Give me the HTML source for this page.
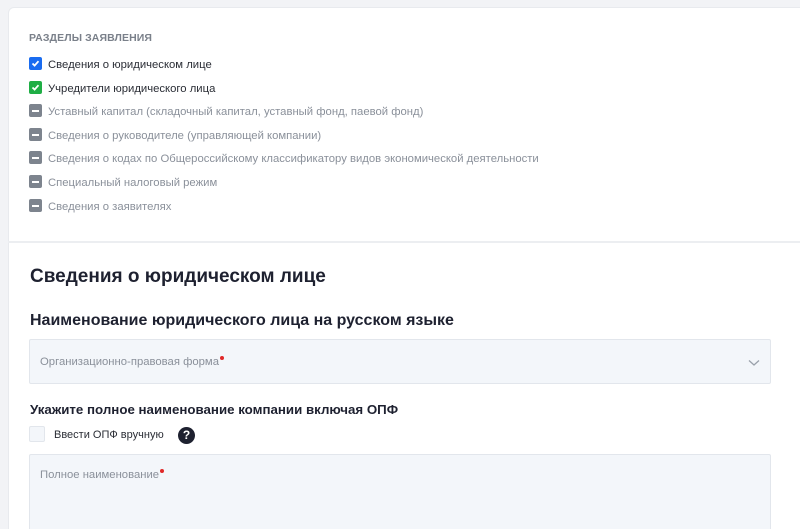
<!DOCTYPE html>
<html><head><meta charset="utf-8"><style>
*{margin:0;padding:0;box-sizing:border-box}
html,body{width:800px;height:529px;overflow:hidden}
body{background:#f2f3f6;font-family:"Liberation Sans",sans-serif;position:relative}
.card{position:absolute;left:8px;top:7px;width:810px;height:540px;background:#fff;border-radius:6px;border:1px solid #e8eaee}
.abs{position:absolute;white-space:nowrap}
.hdr{left:29px;top:32px;font-size:10.5px;font-weight:bold;color:#7a808a;letter-spacing:0.1px}
.item{left:29px;font-size:11.3px;color:#8a909a;line-height:14px}
.item i{position:absolute;left:0;top:0;width:13px;height:13px;border-radius:2px;background:#7d848e}
.item i:after{content:"";position:absolute;left:3px;top:5.5px;width:7px;height:2px;background:#fff}
.item span{margin-left:19px;position:relative;top:1px}
.item.dark{color:#2a2d35}
.item.b i{background:#1a6cf0}.item.g i{background:#1fae45}
.item.b i:after,.item.g i:after{display:none}
.item svg{position:absolute;left:2px;top:2px}
.div{left:8px;top:241px;width:800px;height:2px;background:#eceef1}
h2{position:absolute;left:30px;top:266px;font-size:19px;color:#1e2130;white-space:nowrap}
h3{position:absolute;left:30px;top:312px;font-size:16px;color:#1e2130;white-space:nowrap}
.field{position:absolute;left:29px;width:742px;background:#f3f6fa;border:1px solid #e2e6ec;border-radius:2px}
.ph{position:absolute;font-size:11.3px;color:#8a909a;white-space:nowrap}
.ph:after{content:"";position:absolute;right:-5px;top:0;width:4px;height:4px;border-radius:50%;background:#e02828}
h4{position:absolute;left:30px;top:402px;font-size:13.3px;color:#1e2130;white-space:nowrap}
</style></head><body>
<div class="card"></div>
<div class="abs hdr">РАЗДЕЛЫ ЗАЯВЛЕНИЯ</div>
<div class="abs item dark b" style="top:57px"><i><svg width="9" height="9" viewBox="0 0 9 9"><path d="M1.5 4.5L3.6 6.6L7.5 2.2" stroke="#fff" stroke-width="1.8" fill="none"/></svg></i><span>Сведения о юридическом лице</span></div>
<div class="abs item dark g" style="top:81px"><i><svg width="9" height="9" viewBox="0 0 9 9"><path d="M1.5 4.5L3.6 6.6L7.5 2.2" stroke="#fff" stroke-width="1.8" fill="none"/></svg></i><span>Учредители юридического лица</span></div>
<div class="abs item" style="top:104px"><i></i><span>Уставный капитал (складочный капитал, уставный фонд, паевой фонд)</span></div>
<div class="abs item" style="top:128px"><i></i><span>Сведения о руководителе (управляющей компании)</span></div>
<div class="abs item" style="top:151px"><i></i><span>Сведения о кодах по Общероссийскому классификатору видов экономической деятельности</span></div>
<div class="abs item" style="top:175px"><i></i><span>Специальный налоговый режим</span></div>
<div class="abs item" style="top:199px"><i></i><span>Сведения о заявителях</span></div>
<div class="abs div"></div>
<h2>Сведения о юридическом лице</h2>
<h3>Наименование юридического лица на русском языке</h3>
<div class="field" style="top:339px;height:45px">
<div class="ph" style="left:10px;top:16px">Организационно-правовая форма</div>
<svg style="position:absolute;right:10px;top:19px" width="12" height="8" viewBox="0 0 12 8"><path d="M1 1.5L6 6L11 1.5" stroke="#9aa1ab" stroke-width="1.3" fill="none"/></svg>
</div>
<h4>Укажите полное наименование компании включая ОПФ</h4>
<div class="abs" style="left:29px;top:426px;width:16px;height:16px;background:#f3f6fa;border:1px solid #e2e6ec;border-radius:2px"></div>
<div class="abs" style="left:54px;top:429px;font-size:11px;color:#2a2d35">Ввести ОПФ вручную</div>
<div class="abs" style="left:178px;top:427px;width:17px;height:17px;border-radius:50%;background:#1e2130;color:#fff;font-size:12px;font-weight:bold;text-align:center;line-height:17px">?</div>
<div class="field" style="top:454px;height:100px">
<div class="ph" style="left:10px;top:14px">Полное наименование</div>
</div>
</body></html>
